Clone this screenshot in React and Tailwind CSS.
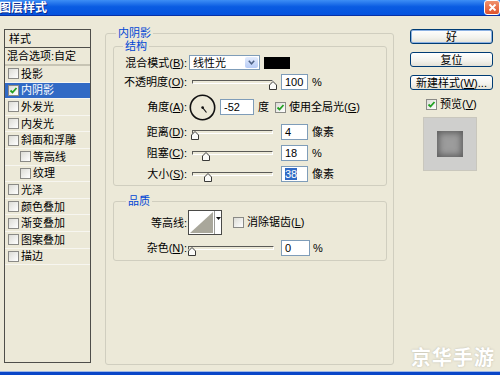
import React from "react";

const font = { fontFamily: '"Liberation Sans", "Noto Sans CJK SC", sans-serif' };

const layers = [
  { label: "投影" },
  { label: "内阴影", checked: true, active: true },
  { label: "外发光" },
  { label: "内发光" },
  { label: "斜面和浮雕" },
  { label: "等高线", indent: true },
  { label: "纹理", indent: true },
  { label: "光泽" },
  { label: "颜色叠加" },
  { label: "渐变叠加" },
  { label: "图案叠加" },
  { label: "描边" },
];

function Box({ checked, className = "" }) {
  return (
    <span className={`flex h-[11px] w-[11px] shrink-0 items-center justify-center border border-[#8a8a86] bg-[linear-gradient(135deg,#dcdcd6,#ffffff)] ${className}`}>
      {checked && (
        <svg width="9" height="9" viewBox="0 0 9 9">
          <path d="M1.5 4.5 L3.5 6.5 L7.5 2" fill="none" stroke="#21a121" strokeWidth="1.8" />
        </svg>
      )}
    </span>
  );
}

function Slider({ width, thumb }) {
  return (
    <div className="relative h-[16px] shrink-0" style={{ width }}>
      <div className="absolute left-0 right-0 top-[6px] h-[4px] border border-[#5a5a56] border-b-white border-r-white bg-[#ece9d8]" />
      <svg className="absolute top-[7px]" style={{ left: thumb }} width="8" height="9" viewBox="0 0 8 9">
        <path d="M4 0.5 L7.5 4 L7.5 8.5 L0.5 8.5 L0.5 4 Z" fill="#fbfbf8" stroke="#3a3a38" />
      </svg>
    </div>
  );
}

function Field({ value, width = 27, selected }) {
  return (
    <div className="flex h-[16px] shrink-0 items-center border border-[#7f9db9] bg-white pl-[3px] text-[11px] leading-[12px]" style={{ width }}>
      {selected ? <span className="bg-[#316ac5] text-white">{value}</span> : value}
    </div>
  );
}

function Label({ children }) {
  return <div className="w-[73px] shrink-0 text-right text-[11px] leading-[14px] text-black">{children}</div>;
}

function Button({ children, main }) {
  return (
    <button
      type="button"
      className={`flex h-[15px] w-[83px] items-center justify-center rounded-[3px] border bg-[linear-gradient(#ffffff,#f3f2ec_60%,#e3e1d6)] text-[11px] leading-[12px] text-black ${main ? "border-[#003c74] shadow-[inset_0_0_0_1px_#8db2e3]" : "border-[#003c74]"}`}
    >
      {children}
    </button>
  );
}

export default function App() {
  return (
    <div className="relative flex h-[375px] w-[500px] flex-col overflow-hidden bg-[#ece9d8]" style={font}>
      {/* title bar */}
      <div className="flex h-[16px] shrink-0 items-center justify-between border-b border-[#0831a5] bg-[linear-gradient(#3d8ef5,#0a5ce2_45%,#0553de)]">
        <span className="-ml-[1px] text-[12px] font-bold leading-[14px] text-white [text-shadow:1px_1px_0_#0b2a8a]">图层样式</span>
        <span className="flex h-[15px] w-[16px] items-center justify-center rounded-[3px] border border-white bg-[linear-gradient(#f0926e,#e0522c)]">
          <svg width="9" height="9" viewBox="0 0 9 9">
            <path d="M1.5 1.5 L7.5 7.5 M7.5 1.5 L1.5 7.5" stroke="white" strokeWidth="1.8" />
          </svg>
        </span>
      </div>

      <div className="flex flex-1">
        {/* style list */}
        <div className="ml-[4px] mt-[13px] flex h-[334px] w-[87px] flex-col border border-[#4e4e4a] text-[11px] text-black">
          <div className="flex h-[18px] items-center border-b border-[#4e4e4a] pl-[4px] leading-[14px]">样式</div>
          <div className="flex h-[18px] items-center border-b-2 border-[#c7c4b4] pl-[2px] leading-[14px]">混合选项:自定</div>
          {layers.map((l) => (
            <div
              key={l.label}
              className={`flex h-[16.6px] items-center border-b border-[#f7f6f0] leading-[14px] ${l.indent ? "pl-[15px]" : "pl-[3px]"} ${l.active ? "bg-[#316ac5] text-white" : ""}`}
            >
              <Box checked={l.checked} />
              <span className="ml-[2px]">{l.label}</span>
            </div>
          ))}
        </div>

        {/* inner shadow panel */}
        <fieldset className="ml-[14px] mt-[11px] h-[338px] w-[289px] shrink-0 rounded-[3px] border border-[#d0cebf]">
          <legend className="ml-[10px] px-[2px] text-[11px] leading-[12px] text-[#0046d5]">内阴影</legend>

          <fieldset className="ml-[7px] w-[274px] rounded-[3px] border border-[#d0cebf] pb-[3px]">
            <legend className="ml-[9px] px-[2px] text-[11px] leading-[14px] text-[#0046d5]">结构</legend>

            <div className="mt-[2px] flex h-[15px] items-center">
              <Label>混合模式(<u>B</u>):</Label>
              <div className="ml-[2px] flex h-[15px] w-[71px] items-center border border-[#7f9db9] bg-white">
                <span className="flex-1 pl-[3px] text-[11px] leading-[12px]">线性光</span>
                <span className="mr-[1px] flex h-[11px] w-[13px] items-center justify-center rounded-[2px] bg-[linear-gradient(#e3ecfd,#b6cbf5)]">
                  <svg width="7" height="5" viewBox="0 0 7 5">
                    <path d="M0.8 0.8 L3.5 3.8 L6.2 0.8" fill="none" stroke="#4d6185" strokeWidth="1.5" />
                  </svg>
                </span>
              </div>
              <div className="ml-[4px] h-[12px] w-[26px] bg-black" />
            </div>

            <div className="mt-[4px] flex h-[16px] items-center">
              <Label>不透明度(<u>O</u>):</Label>
              <div className="ml-[5px]"><Slider width={81} thumb={77} /></div>
              <div className="ml-[8px]"><Field value="100" /></div>
              <span className="ml-[4px] text-[11px]">%</span>
            </div>

            <div className="mt-[4px] flex h-[26px] items-center">
              <Label>角度(<u>A</u>):</Label>
              <svg className="ml-[2px] shrink-0" width="27" height="27" viewBox="0 0 27 27">
                <circle cx="13.5" cy="13.5" r="12.2" fill="#ece9d8" stroke="#111" strokeWidth="1.6" />
                <path d="M13.5 13.5 L17.5 18.5" stroke="#111" strokeWidth="1.2" />
                <circle cx="13.6" cy="13.6" r="1.3" fill="#111" />
              </svg>
              <div className="ml-[4px]"><Field value="-52" width={34} /></div>
              <span className="ml-[4px] text-[11px]">度</span>
              <Box checked className="ml-[6px] border-[#1c5180]" />
              <span className="ml-[3px] whitespace-nowrap text-[11px]">使用全局光(<u>G</u>)</span>
            </div>

            <div className="mt-[4px] flex h-[16px] items-center">
              <Label>距离(<u>D</u>):</Label>
              <div className="ml-[5px]"><Slider width={81} thumb={-1} /></div>
              <div className="ml-[8px]"><Field value="4" /></div>
              <span className="ml-[4px] text-[11px]">像素</span>
            </div>

            <div className="mt-[5px] flex h-[16px] items-center">
              <Label>阻塞(<u>C</u>):</Label>
              <div className="ml-[5px]"><Slider width={81} thumb={10} /></div>
              <div className="ml-[8px]"><Field value="18" /></div>
              <span className="ml-[4px] text-[11px]">%</span>
            </div>

            <div className="mt-[5px] flex h-[16px] items-center">
              <Label>大小(<u>S</u>):</Label>
              <div className="ml-[5px]"><Slider width={81} thumb={12} /></div>
              <div className="ml-[8px]"><Field value="38" selected /></div>
              <span className="ml-[4px] text-[11px]">像素</span>
            </div>
          </fieldset>

          <fieldset className="ml-[7px] mt-[8px] w-[274px] rounded-[3px] border border-[#d0cebf] pb-[4px]">
            <legend className="ml-[12px] px-[2px] text-[11px] leading-[14px] text-[#0046d5]">品质</legend>

            <div className="mt-[2px] flex h-[25px] items-center">
              <Label>等高线:</Label>
              <div className="ml-[1px] flex h-[25px] w-[34px] border border-[#4a4a48] bg-white">
                <svg width="25" height="23" viewBox="0 0 25 23" className="shrink-0">
                  <path d="M1 22 L24 1 L24 22 Z" fill="#a9a79b" />
                </svg>
                <div className="flex flex-1 justify-center border-l border-[#9a9a96] pt-[6px]">
                  <svg width="5" height="3" viewBox="0 0 5 3">
                    <path d="M0 0 L5 0 L2.5 3 Z" fill="#111" />
                  </svg>
                </div>
              </div>
              <Box className="ml-[11px]" />
              <span className="ml-[3px] text-[11px]">消除锯齿(<u>L</u>)</span>
            </div>

            <div className="mt-[5px] flex h-[16px] items-center">
              <Label>杂色(<u>N</u>):</Label>
              <div className="ml-[1px]"><Slider width={86} thumb={0} /></div>
              <div className="ml-[7px]"><Field value="0" width={29} /></div>
              <span className="ml-[3px] text-[11px]">%</span>
            </div>
          </fieldset>
        </fieldset>

        {/* buttons */}
        <div className="ml-[16px] mt-[13px] flex w-[83px] flex-col">
          <Button main>好</Button>
          <div className="mt-[8px]"><Button>复位</Button></div>
          <div className="mt-[8px]"><Button>新建样式(<u>W</u>)...</Button></div>
          <div className="mt-[7px] flex items-center pl-[16px] text-[11px] leading-[14px]">
            <Box checked className="border-[#1c5180]" />
            <span className="ml-[3px]">预览(<u>V</u>)</span>
          </div>
          <div className="ml-[13px] mt-[6px] flex h-[54px] w-[54px] items-center justify-center border border-[#c9c7bd] bg-[#cfcfcd]">
            <div className="h-[26px] w-[26px] bg-[#9c9c9c] shadow-[inset_0_0_6px_2px_#5e5e5e]" />
          </div>
        </div>
      </div>

      {/* bottom edge */}
      <div className="h-[4px] shrink-0 border-t border-[#9fb6e6] bg-[#0a46c8]" />

      <div className="absolute bottom-[7px] right-[5px] text-[20px] font-bold leading-[22px] tracking-[1px] text-white [text-shadow:0_0_2px_#b8b6a8]" style={{ fontFamily: '"Noto Sans CJK SC", sans-serif' }}>
        京华手游
      </div>
    </div>
  );
}
